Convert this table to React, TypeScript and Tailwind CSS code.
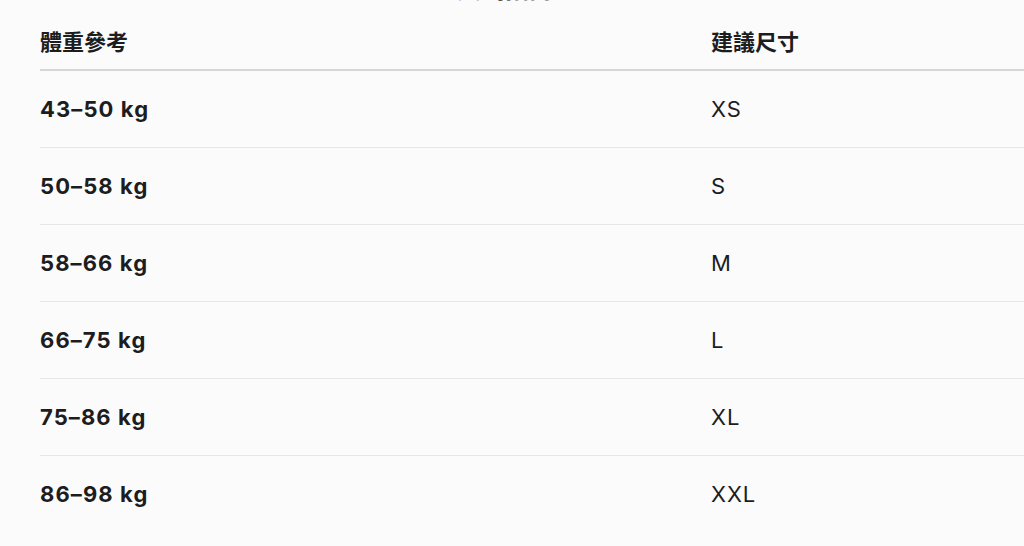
const ROWS = [
  { weight: "43–50 kg", size: "XS" },
  { weight: "50–58 kg", size: "S" },
  { weight: "58–66 kg", size: "M" },
  { weight: "66–75 kg", size: "L" },
  { weight: "75–86 kg", size: "XL" },
  { weight: "86–98 kg", size: "XXL" },
]

export default function App() {
  return (
    <div
      className="h-[546px] w-[1024px] overflow-hidden bg-[#fbfbfb] text-[#1d1d1f]"
      style={{ fontFamily: 'Inter, "Noto Sans CJK TC", sans-serif' }}
    >
      {/* heading scrolled mostly out of view */}
      <h2 className="-mt-[24px] pr-[14px] text-center text-[24px] leading-[28px] font-semibold text-[#555]">
        尺碼指南
      </h2>

      <div className="pl-10">
        <div className="grid grid-cols-[671px_1fr] border-b-2 border-[#d6d6d6] pt-[24px] pb-[13px] text-[22px] leading-[28px] font-semibold">
          <div>體重參考</div>
          <div>建議尺寸</div>
        </div>

        {ROWS.map((row, i) => (
          <div
            key={row.size}
            className={`grid grid-cols-[671px_1fr] py-6 text-[22px] leading-[28px] ${
              i < ROWS.length - 1 ? "border-b border-[#e6e6e6]" : ""
            }`}
          >
            <div className="font-bold tracking-[0.05em]">{row.weight}</div>
            <div className="font-normal tracking-[0.04em]">{row.size}</div>
          </div>
        ))}
      </div>
    </div>
  )
}
